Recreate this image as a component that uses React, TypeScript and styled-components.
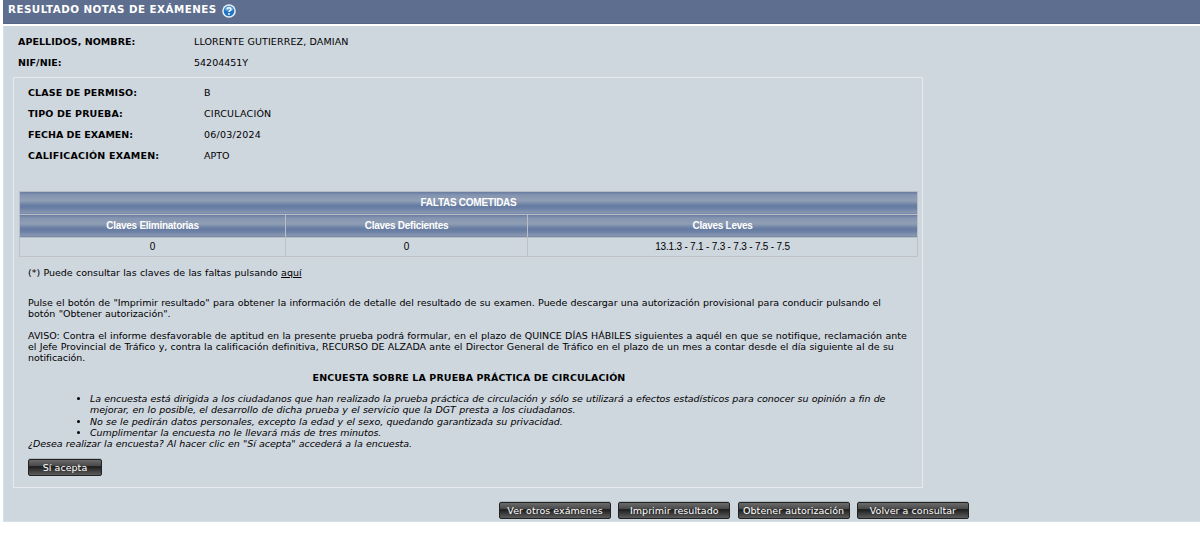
import React from 'react';
import styled, { createGlobalStyle } from 'styled-components';

const GlobalStyle = createGlobalStyle`
    * {
        box-sizing: border-box;
    }

    body {
        margin: 0;
        background-color: #fff;
        color: #000;
        font-family: Verdana, 'DejaVu Sans', sans-serif;
        font-size: 9.5px;
    }
`;

const Page = styled.div`
    height: 538px;
    padding-left: 3px;
    overflow: hidden;
`;

const TitleBar = styled.header`
    display: flex;
    align-items: flex-start;
    height: 24px;
    padding: 2px 5px 0;
    background-color: #5d6e8e;
    border-bottom: 1px solid #53678a;
`;

const Title = styled.h1`
    margin: 0 5px 0 0;
    color: #fff;
    font-size: 10.3px;
    line-height: 14px;
    letter-spacing: 0.48px;
    white-space: nowrap;
`;

const HelpIcon = styled.svg`
    display: block;
    margin-top: 2px;
`;

const Panel = styled.main`
    height: 496px;
    margin-top: 2px;
    padding: 6px 0 0 10px;
    background-color: #ced6de;
    border-left: 1px solid #d5dfe6;
    border-bottom: 1px solid #d5dfe6;
`;

const Field = styled.div<{ $indent?: number }>`
    display: flex;
    height: 20.7px;
    padding-left: ${({ $indent = 4 }) => $indent}px;
    line-height: 20.7px;
`;

const Label = styled.span<{ $track?: number }>`
    width: 176px;
    font-weight: bold;
    letter-spacing: ${({ $track = 0 }) => $track}px;
    white-space: nowrap;
`;

const Value = styled.span<{ $track?: number }>`
    letter-spacing: ${({ $track = 0 }) => $track}px;
    white-space: nowrap;
`;

const ExamBox = styled.section`
    width: 910px;
    height: 411px;
    margin: 3.6px 0 0 -1px;
    padding: 5.5px 5px 0;
    border: 1px solid #e7ebef;
`;

const FaultTable = styled.table`
    width: 898px;
    margin-top: 24.7px;
    border-collapse: collapse;
    table-layout: fixed;
    font-family: 'Liberation Sans', Arial, sans-serif;
    font-size: 10px;
    text-align: center;
`;

const HeadCell = styled.th`
    height: 23px;
    padding: 0;
    border: 1px solid #b9bec5;
    background: linear-gradient(#61759c 0, #8494b0 15%, #909eb5 42%, #667ba1 64%, #6a7fa4 76%, #8e9bb4 100%);
    color: #fff;
    line-height: 12px;
    letter-spacing: -0.27px;
`;

const BodyCell = styled.td`
    height: 19px;
    padding: 0;
    border: 1px solid #bec2c6;
    line-height: 12px;
    letter-spacing: -0.2px;
`;

const Copy = styled.div`
    padding-left: 9px;
    line-height: 11.2px;
`;

const Paragraph = styled.p<{ $top: number }>`
    margin: ${({ $top }) => $top}px 0 0;
`;

const Line = styled.span<{ $track?: number }>`
    display: block;
    letter-spacing: ${({ $track = -0.05 }) => $track}px;
    word-spacing: 0.33px;
    white-space: nowrap;
`;

const Link = styled.a`
    color: #000;
    text-decoration: underline;
`;

const SurveyTitle = styled.h2`
    margin: 9px 7px 0 0;
    font-size: 9.5px;
    line-height: 11px;
    letter-spacing: 0.11px;
    text-align: center;
`;

const Survey = styled.div`
    margin-top: 10px;
    font-style: italic;
`;

const SurveyList = styled.ul`
    margin: 0;
    padding-left: 62px;
`;

const Button = styled.button<{ $width: number }>`
    width: ${({ $width }) => $width}px;
    height: 17px;
    padding: 0;
    border: 1px solid #222;
    border-radius: 2px;
    background: linear-gradient(#6b6b6b 0, #484848 40%, #1c1c1c 44%, #303030 60%, #5c5c5c 100%);
    box-shadow: 0 -1px 0 #aebcc2;
    color: #fff;
    font-family: inherit;
    font-size: 9.5px;
    line-height: 15px;
    letter-spacing: 0.04px;
    white-space: nowrap;
`;

const AcceptRow = styled.div`
    display: flex;
    padding-top: 10px;
`;

const Actions = styled.div`
    display: flex;
    gap: 7.3px;
    padding: 14px 0 0 485px;
`;

const fields = [
    { label: 'CLASE DE PERMISO:', value: 'B', labelTrack: 0.12, valueTrack: 0 },
    { label: 'TIPO DE PRUEBA:', value: 'CIRCULACIÓN', labelTrack: 0.13, valueTrack: 0.22 },
    { label: 'FECHA DE EXAMEN:', value: '06/03/2024', labelTrack: 0, valueTrack: 0.22 },
    { label: 'CALIFICACIÓN EXAMEN:', value: 'APTO', labelTrack: 0.22, valueTrack: 0 },
];

const actions = ['Ver otros exámenes', 'Imprimir resultado', 'Obtener autorización', 'Volver a consultar'];

const Help: React.FC = () => (
    <HelpIcon width="14" height="14" viewBox="0 0 14 14">
        <circle cx="7" cy="7" r="6.8" fill="#e8eff6" />
        <circle cx="7" cy="7" r="5.3" fill="#2274c4" />
        <path d="M2.5 6a4.6 4.6 0 0 1 9 0Q7 8 2.5 6" fill="#5aa0de" />
        <path d="M5 5.4Q5.1 3.7 7 3.7T9 5.3Q9 6.3 7.8 6.8 7 7.2 7 8.1" fill="none" stroke="#fff" strokeWidth="1.5" />
        <circle cx="7" cy="10" r="0.9" fill="#fff" />
    </HelpIcon>
);

const App: React.FC = () => {
    return (
        <>
            <GlobalStyle />
            <Page>
                <TitleBar>
                    <Title>RESULTADO NOTAS DE EXÁMENES</Title>
                    <Help />
                </TitleBar>
                <Panel>
                    <Field>
                        <Label $track={0.05}>APELLIDOS, NOMBRE:</Label>
                        <Value $track={0.13}>LLORENTE GUTIERREZ, DAMIAN</Value>
                    </Field>
                    <Field>
                        <Label $track={0.05}>NIF/NIE:</Label>
                        <Value>54204451Y</Value>
                    </Field>
                    <ExamBox>
                        {fields.map(({ label, value, labelTrack, valueTrack }) => (
                            <Field key={label} $indent={9}>
                                <Label $track={labelTrack}>{label}</Label>
                                <Value $track={valueTrack}>{value}</Value>
                            </Field>
                        ))}
                        <FaultTable>
                            <colgroup>
                                <col width="266" />
                                <col width="242" />
                                <col width="390" />
                            </colgroup>
                            <thead>
                                <tr>
                                    <HeadCell colSpan={3}>FALTAS COMETIDAS</HeadCell>
                                </tr>
                                <tr>
                                    <HeadCell>Claves Eliminatorias</HeadCell>
                                    <HeadCell>Claves Deficientes</HeadCell>
                                    <HeadCell>Claves Leves</HeadCell>
                                </tr>
                            </thead>
                            <tbody>
                                <tr>
                                    <BodyCell>0</BodyCell>
                                    <BodyCell>0</BodyCell>
                                    <BodyCell>13.1.3 - 7.1 - 7.3 - 7.3 - 7.5 - 7.5</BodyCell>
                                </tr>
                            </tbody>
                        </FaultTable>
                        <Copy>
                            <Paragraph $top={10}>
                                <Line $track={-0.02}>
                                    (*) Puede consultar las claves de las faltas pulsando <Link>aquí</Link>
                                </Line>
                            </Paragraph>
                            <Paragraph $top={19}>
                                <Line $track={-0.042}>Pulse el botón de "Imprimir resultado" para obtener la información de detalle del resultado de su examen. Puede descargar una autorización provisional para conducir pulsando el</Line>
                                <Line $track={-0.02}>botón "Obtener autorización".</Line>
                            </Paragraph>
                            <Paragraph $top={10}>
                                <Line $track={-0.01}>AVISO: Contra el informe desfavorable de aptitud en la presente prueba podrá formular, en el plazo de QUINCE DÍAS HÁBILES siguientes a aquél en que se notifique, reclamación ante</Line>
                                <Line $track={-0.038}>el Jefe Provincial de Tráfico y, contra la calificación definitiva, RECURSO DE ALZADA ante el Director General de Tráfico en el plazo de un mes a contar desde el día siguiente al de su</Line>
                                <Line>notificación.</Line>
                            </Paragraph>
                            <SurveyTitle>ENCUESTA SOBRE LA PRUEBA PRÁCTICA DE CIRCULACIÓN</SurveyTitle>
                            <Survey>
                                <SurveyList>
                                    <li>
                                        <Line $track={-0.066}>La encuesta está dirigida a los ciudadanos que han realizado la prueba práctica de circulación y sólo se utilizará a efectos estadísticos para conocer su opinión a fin de</Line>
                                        <Line $track={-0.03}>mejorar, en lo posible, el desarrollo de dicha prueba y el servicio que la DGT presta a los ciudadanos.</Line>
                                    </li>
                                    <li>
                                        <Line>No se le pedirán datos personales, excepto la edad y el sexo, quedando garantizada su privacidad.</Line>
                                    </li>
                                    <li>
                                        <Line>Cumplimentar la encuesta no le llevará más de tres minutos.</Line>
                                    </li>
                                </SurveyList>
                                <Line $track={-0.06}>¿Desea realizar la encuesta? Al hacer clic en "Sí acepta" accederá a la encuesta.</Line>
                            </Survey>
                            <AcceptRow>
                                <Button $width={74}>Sí acepta</Button>
                            </AcceptRow>
                        </Copy>
                    </ExamBox>
                    <Actions>
                        {actions.map((action) => (
                            <Button key={action} $width={112}>{action}</Button>
                        ))}
                    </Actions>
                </Panel>
            </Page>
        </>
    );
};

export default App;
